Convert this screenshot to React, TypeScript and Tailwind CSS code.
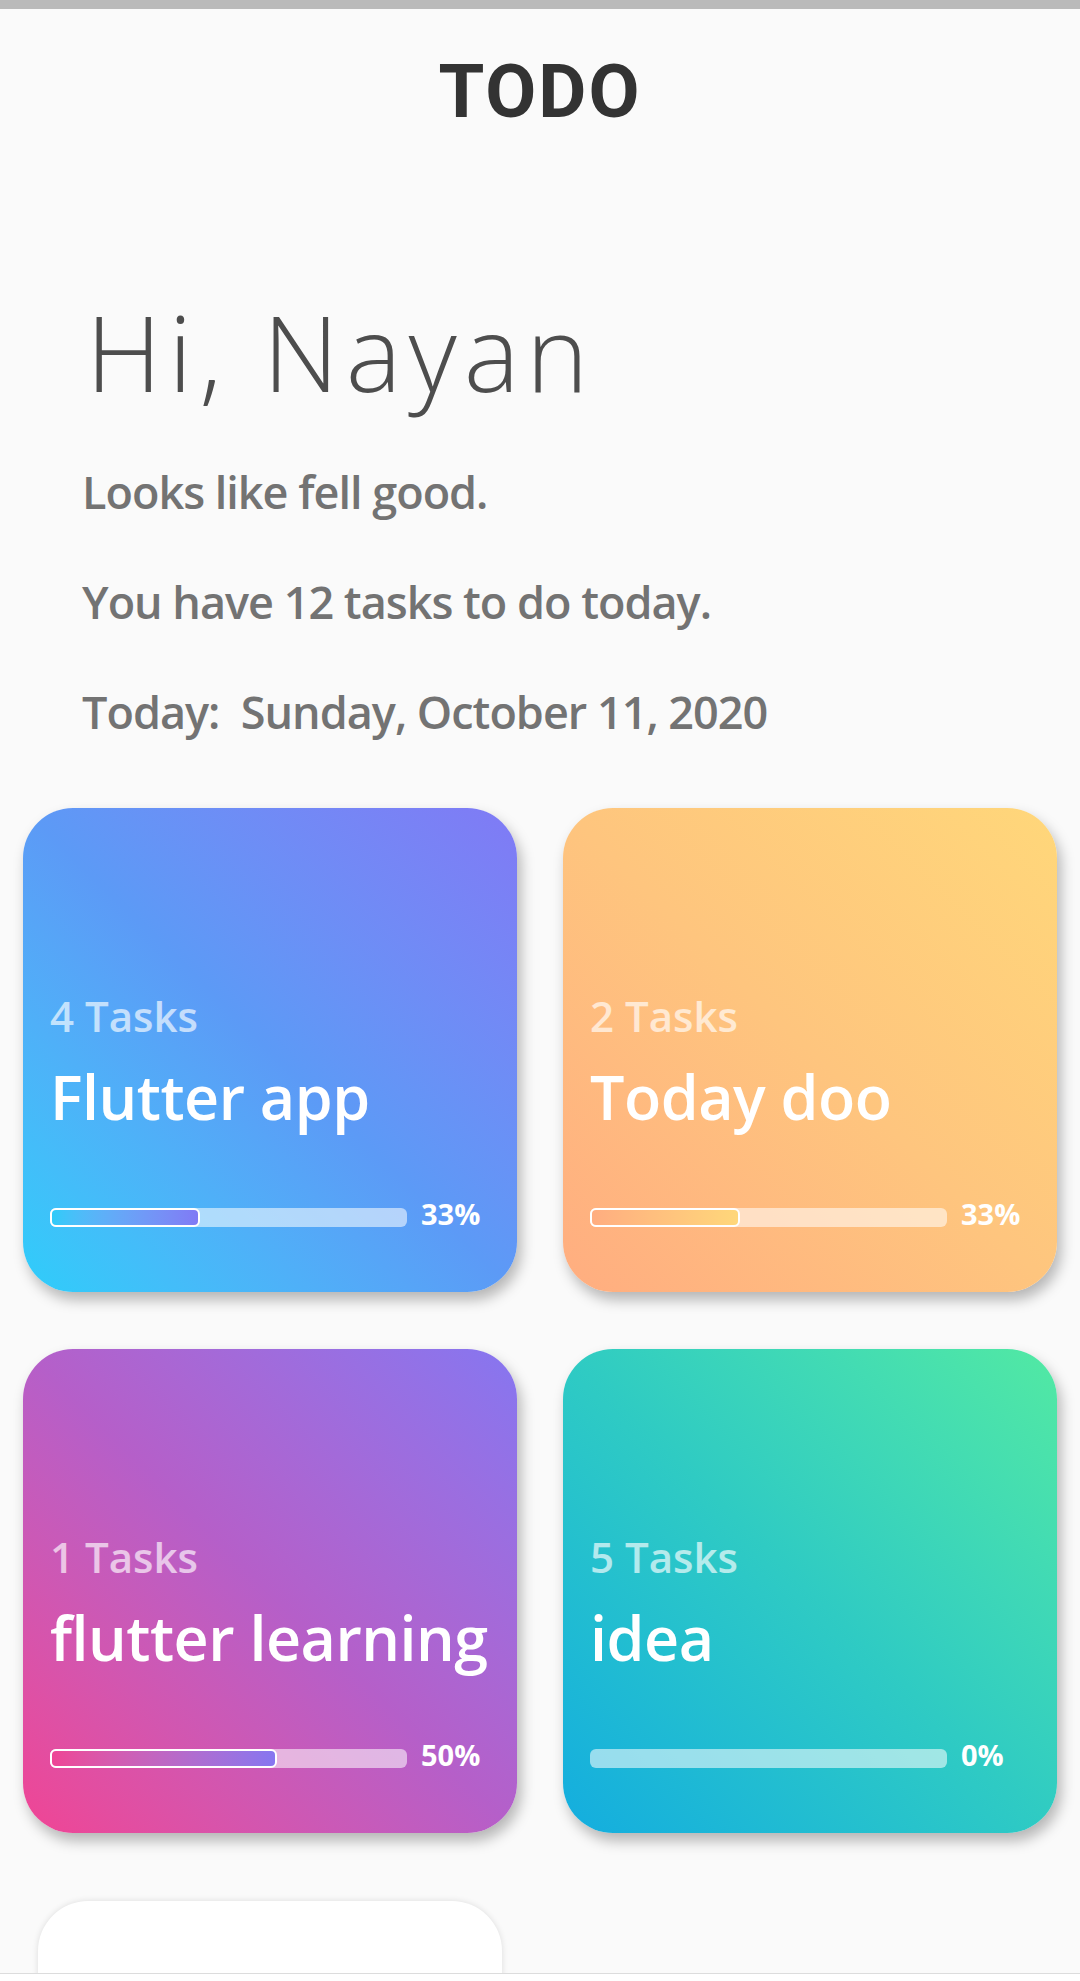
type Project = {
  count: number;
  title: string;
  percent: number;
  fill: number;
  card: string;
  bar: string;
};

const projects: Project[] = [
  {
    count: 4,
    title: 'Flutter app',
    percent: 33,
    fill: 150,
    card: 'bg-gradient-to-tr from-[#2dcdfa] via-[#5c9af6] to-[#807af5]',
    bar: 'bg-gradient-to-r from-[#2ecbf9] to-[#807af5]',
  },
  {
    count: 2,
    title: 'Today doo',
    percent: 33,
    fill: 150,
    card: 'bg-gradient-to-tr from-[#ffad80] via-[#fec57e] to-[#ffd77a]',
    bar: 'bg-gradient-to-r from-[#ffad80] to-[#ffd77a]',
  },
  {
    count: 1,
    title: 'flutter learning',
    percent: 50,
    fill: 227,
    card: 'bg-gradient-to-tr from-[#f04494] via-[#b55fc9] to-[#8676f0]',
    bar: 'bg-gradient-to-r from-[#ee4596] to-[#8676f0]',
  },
  {
    count: 5,
    title: 'idea',
    percent: 0,
    fill: 0,
    card: 'bg-gradient-to-tr from-[#14addf] via-[#2fcbc3] to-[#52e9a3]',
    bar: 'bg-gradient-to-r from-[#14addf] to-[#52e9a3]',
  },
];

function ProjectCard({ p }: { p: Project }) {
  return (
    <div
      className={`h-[484px] rounded-[50px] ${p.card} shadow-[4px_8px_14px_rgba(0,0,0,0.28)] px-[27px] pt-[187px] text-white`}
    >
      <p className="text-[42px] leading-none font-semibold text-white/65">{p.count} Tasks</p>
      <p className="mt-[29px] text-[61px] leading-none font-semibold tracking-[-0.5px] whitespace-nowrap">{p.title}</p>
      <div className="mt-[80px] flex items-center">
        <div className="relative h-[19px] w-[357px] rounded-[6px] bg-white/55">
          {p.fill > 0 && (
            <div
              className={`absolute left-0 top-0 h-[19px] rounded-[6px] border-2 border-white ${p.bar}`}
              style={{ width: p.fill }}
            />
          )}
        </div>
        <span className="ml-[14px] -mt-[8px] text-[29px] leading-none font-bold">{p.percent}%</span>
      </div>
    </div>
  );
}

export default function App() {
  return (
    <div className="h-[1981px] bg-[#fafafa] flex flex-col overflow-hidden font-['Open_Sans',sans-serif]">
      <div className="h-[9px] shrink-0 bg-[#bababa]" />
      <div className="flex-1 min-h-0 overflow-hidden">
        <h1 className="mt-[46px] text-center text-[74px] leading-none font-bold tracking-[2px] text-[#333333] font-['Roboto',sans-serif]">
          TODO
        </h1>

        <section className="mt-[170px] pl-[82px]">
          <p className="ml-[4px] text-[105px] leading-none font-light tracking-[7px] text-[#4d4d4d]">Hi, Nayan</p>
          <div className="mt-[33px] text-[45px] leading-[110px] font-semibold text-[#737373] tracking-[-1px]">
            <p>Looks like fell good.</p>
            <p>You have 12 tasks to do today.</p>
            <p>Today:&nbsp; Sunday, October 11, 2020</p>
          </div>
        </section>

        <div className="mt-[41px] grid grid-cols-2 gap-x-[46px] gap-y-[57px] px-[23px]">
          {projects.map((p) => (
            <ProjectCard key={p.title} p={p} />
          ))}
          <div className="mx-[15px] mt-[11px] h-[484px] rounded-[50px] bg-white shadow-[0_0_6px_rgba(0,0,0,0.12)]" />
        </div>
      </div>
      <div className="h-[8px] shrink-0 border-t border-[#dcdcdc] bg-white" />
    </div>
  );
}
